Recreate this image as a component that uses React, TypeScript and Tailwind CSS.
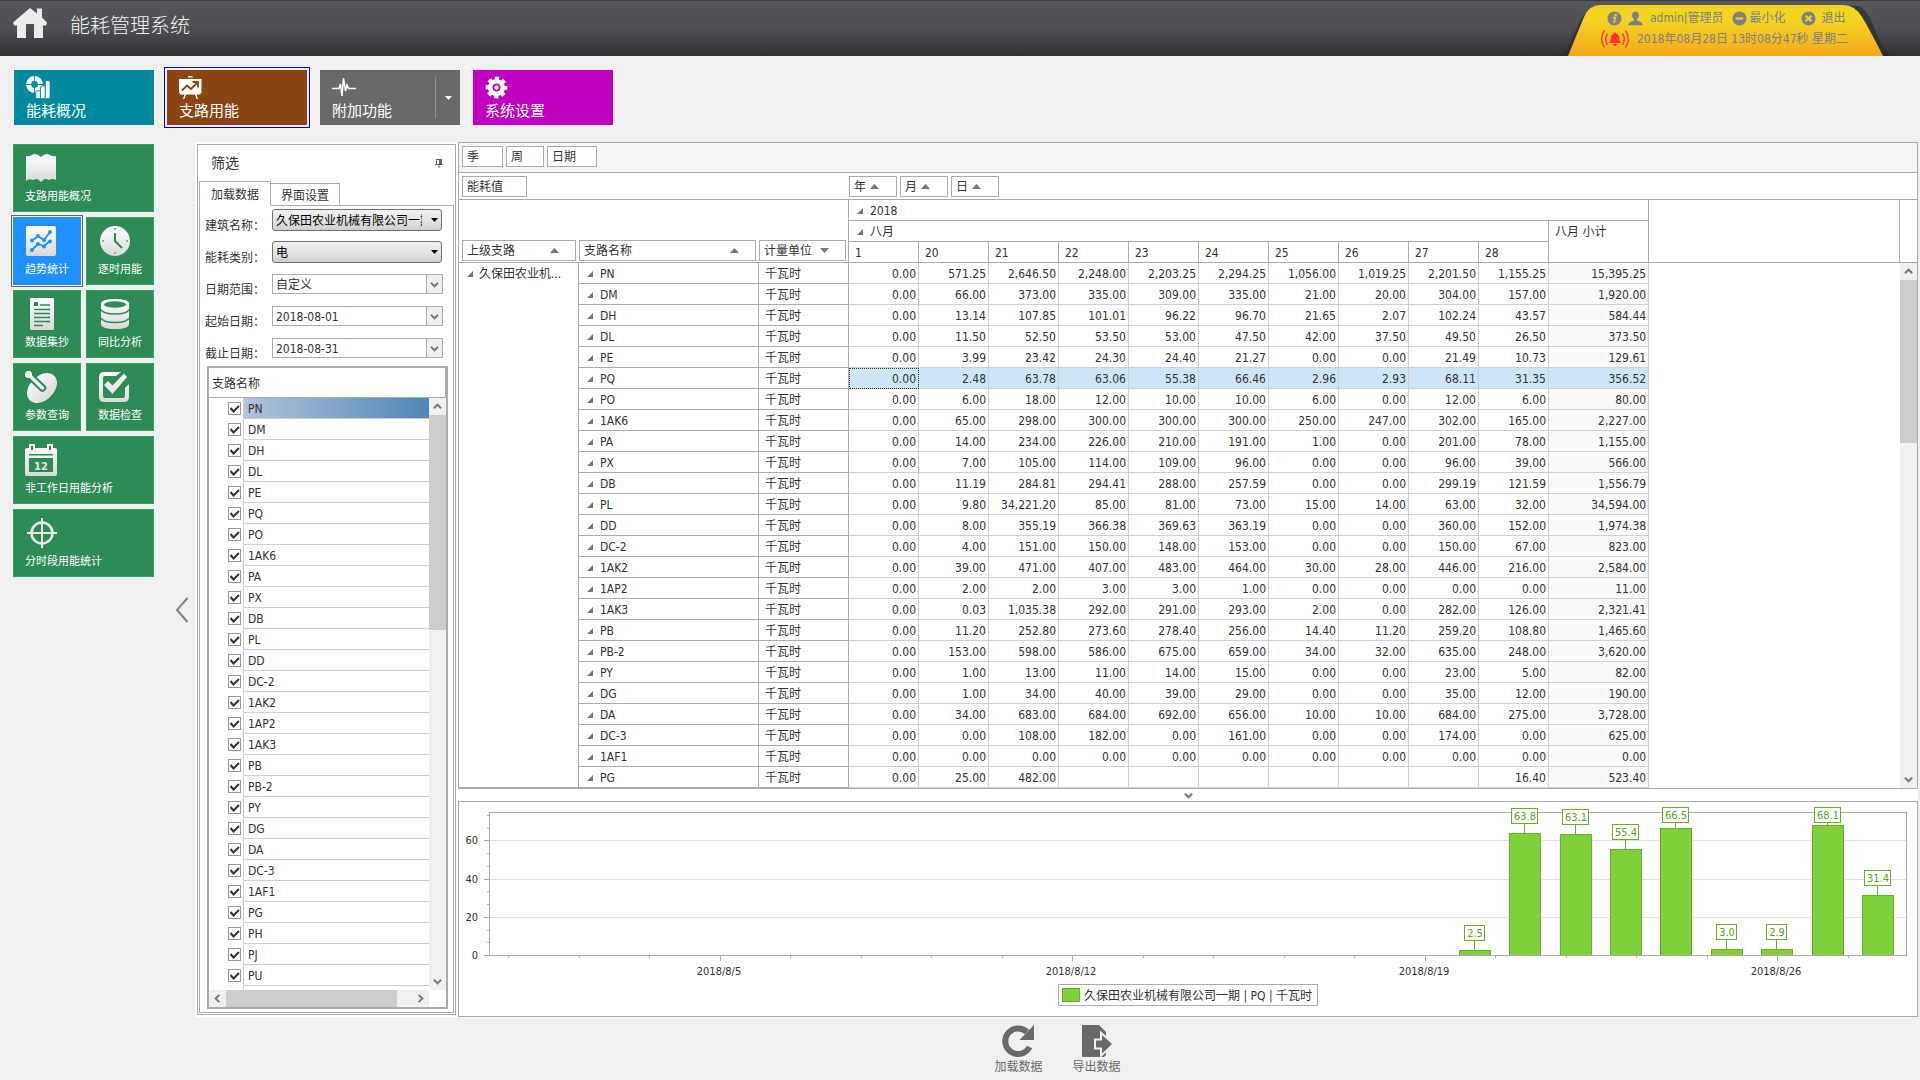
import { useState } from "react";
import type { ReactNode } from "react";
import clsx from "clsx";

const UNIT = "千瓦时";
const DAYS = ["1", "20", "21", "22", "23", "24", "25", "26", "27", "28"];

type Row = { name: string; values: string[]; total: string };

// name | one value per day | month subtotal
const ROWS: Row[] = [
    "PN|0.00|571.25|2,646.50|2,248.00|2,203.25|2,294.25|1,056.00|1,019.25|2,201.50|1,155.25|15,395.25",
    "DM|0.00|66.00|373.00|335.00|309.00|335.00|21.00|20.00|304.00|157.00|1,920.00",
    "DH|0.00|13.14|107.85|101.01|96.22|96.70|21.65|2.07|102.24|43.57|584.44",
    "DL|0.00|11.50|52.50|53.50|53.00|47.50|42.00|37.50|49.50|26.50|373.50",
    "PE|0.00|3.99|23.42|24.30|24.40|21.27|0.00|0.00|21.49|10.73|129.61",
    "PQ|0.00|2.48|63.78|63.06|55.38|66.46|2.96|2.93|68.11|31.35|356.52",
    "PO|0.00|6.00|18.00|12.00|10.00|10.00|6.00|0.00|12.00|6.00|80.00",
    "1AK6|0.00|65.00|298.00|300.00|300.00|300.00|250.00|247.00|302.00|165.00|2,227.00",
    "PA|0.00|14.00|234.00|226.00|210.00|191.00|1.00|0.00|201.00|78.00|1,155.00",
    "PX|0.00|7.00|105.00|114.00|109.00|96.00|0.00|0.00|96.00|39.00|566.00",
    "DB|0.00|11.19|284.81|294.41|288.00|257.59|0.00|0.00|299.19|121.59|1,556.79",
    "PL|0.00|9.80|34,221.20|85.00|81.00|73.00|15.00|14.00|63.00|32.00|34,594.00",
    "DD|0.00|8.00|355.19|366.38|369.63|363.19|0.00|0.00|360.00|152.00|1,974.38",
    "DC-2|0.00|4.00|151.00|150.00|148.00|153.00|0.00|0.00|150.00|67.00|823.00",
    "1AK2|0.00|39.00|471.00|407.00|483.00|464.00|30.00|28.00|446.00|216.00|2,584.00",
    "1AP2|0.00|2.00|2.00|3.00|3.00|1.00|0.00|0.00|0.00|0.00|11.00",
    "1AK3|0.00|0.03|1,035.38|292.00|291.00|293.00|2.00|0.00|282.00|126.00|2,321.41",
    "PB|0.00|11.20|252.80|273.60|278.40|256.00|14.40|11.20|259.20|108.80|1,465.60",
    "PB-2|0.00|153.00|598.00|586.00|675.00|659.00|34.00|32.00|635.00|248.00|3,620.00",
    "PY|0.00|1.00|13.00|11.00|14.00|15.00|0.00|0.00|23.00|5.00|82.00",
    "DG|0.00|1.00|34.00|40.00|39.00|29.00|0.00|0.00|35.00|12.00|190.00",
    "DA|0.00|34.00|683.00|684.00|692.00|656.00|10.00|10.00|684.00|275.00|3,728.00",
    "DC-3|0.00|0.00|108.00|182.00|0.00|161.00|0.00|0.00|174.00|0.00|625.00",
    "1AF1|0.00|0.00|0.00|0.00|0.00|0.00|0.00|0.00|0.00|0.00|0.00",
    "PG|0.00|25.00|482.00|||||||16.40|523.40",
].map((line) => {
    const [name, ...values] = line.split("|");
    return { name, values: values.slice(0, 10), total: values[10] };
});

const BRANCHES = [...ROWS.map((row) => row.name), "PH", "PJ", "PU"];

const BARS = [
    { day: 20, value: 2.48, label: "2.5" },
    { day: 21, value: 63.78, label: "63.8" },
    { day: 22, value: 63.06, label: "63.1" },
    { day: 23, value: 55.38, label: "55.4" },
    { day: 24, value: 66.46, label: "66.5" },
    { day: 25, value: 2.96, label: "3.0" },
    { day: 26, value: 2.93, label: "2.9" },
    { day: 27, value: 68.11, label: "68.1" },
    { day: 28, value: 31.35, label: "31.4" },
];

/* ---------- small glyphs ---------- */

const CHEVRONS = {
    up: "M1 7 5 3 9 7",
    down: "M1 3 5 7 9 3",
    left: "M7 1 3 5 7 9",
    right: "M3 1 7 5 3 9",
};

function Chevron({ dir }: { dir: keyof typeof CHEVRONS }) {
    return (
        <svg viewBox="0 0 10 10" className="h-[9px] w-[9px]" aria-hidden="true">
            <path d={CHEVRONS[dir]} fill="none" stroke="#7a7a7a" strokeWidth="2.2" />
        </svg>
    );
}

function Expand() {
    return (
        <svg viewBox="0 0 6 6" className="inline-block h-[6px] w-[6px] shrink-0" aria-hidden="true">
            <path d="M6 0V6H0z" fill="#777" />
        </svg>
    );
}

function Sort({ down = false }: { down?: boolean }) {
    return (
        <svg viewBox="0 0 9 5" className="h-[5px] w-[9px] shrink-0" aria-hidden="true">
            <path d={down ? "M0 0H9L4.500 5z" : "M0 5H9L4.500 0z"} fill="#777" />
        </svg>
    );
}

/* ---------- header ---------- */

function InfoIcon() {
    return (
        <svg viewBox="0 0 16 16" className="h-[15px] w-[15px]" aria-hidden="true">
            <circle cx="8" cy="8" r="7.500" fill="#808080" />
            <circle cx="9.300" cy="4.200" r="1.300" fill="#f3cf22" />
            <path d="M6 7h3l-1.300 4.600h1.200" fill="none" stroke="#f3cf22" strokeWidth="1.700" />
        </svg>
    );
}

function UserIcon() {
    return (
        <svg viewBox="0 0 16 16" className="h-[15px] w-[15px]" aria-hidden="true">
            <path
                d="M8 0.500c2.300 0 3.700 1.700 3.700 4 0 1.700-.8 3.200-1.900 4.100v1.900c2.800.6 5.700 1.600 5.900 4.800H.3c.2-3.200 3.100-4.200 5.900-4.800V8.600C5.100 7.700 4.300 6.200 4.300 4.500c0-2.300 1.400-4 3.700-4z"
                fill="#808080"
            />
        </svg>
    );
}

function RoundIcon({ d }: { d: string }) {
    return (
        <svg viewBox="0 0 16 16" className="h-[15px] w-[15px]" aria-hidden="true">
            <circle cx="8" cy="8" r="7.500" fill="#808080" />
            <path d={d} stroke="#f3cf22" strokeWidth="2.400" />
        </svg>
    );
}

function AlarmIcon() {
    return (
        <svg viewBox="0 0 30 20" className="h-[20px] w-[30px]" aria-hidden="true">
            <path
                d="M15 3.500c.8 0 1.300.5 1.300 1.200 2 .6 3 2.300 3 4.500 0 2.500.6 3.700 1.700 4.800H9c1.100-1.100 1.700-2.300 1.700-4.800 0-2.200 1-3.900 3-4.500 0-.7.5-1.200 1.300-1.200zM13 15h4c0 1.200-.9 1.900-2 1.900s-2-.7-2-1.900z"
                fill="#f33"
            />
            <path
                d="M7.500 4.500Q4 10 7.500 16M4.500 1.500Q-1.500 10 4.500 18.500M22.500 4.500Q26 10 22.500 16M25.500 1.500Q31.500 10 25.500 18.500"
                fill="none"
                stroke="#f3473a"
                strokeWidth="1.500"
            />
        </svg>
    );
}

function Header() {
    return (
        <header className="flex h-14 shrink-0 items-start border-t border-[#3c3d40] bg-linear-to-b from-[#57585c] via-[#4d4f52] to-[#2f3134]">
            <a href="#home" aria-label="首页" className="mt-[6px] ml-[12px]">
                <svg viewBox="0 0 36 32" className="h-[32px] w-[36px]" aria-hidden="true">
                    <path
                        d="M18 1 25 6.500V1.500h5v9L35 15.500 34 18.500h-3V31h-9V17h-8V31H5V18.500H2L1 15.500z"
                        fill="#ececec"
                    />
                </svg>
            </a>
            <h1 className="mt-[9px] ml-[22px] text-[20px] leading-[32px] font-light text-[#f2f2f2]">
                能耗管理系统
            </h1>
            <div className="relative mt-[4px] mr-[35px] ml-auto h-[51px] w-[316px] text-[12px] text-[#808080]">
                <svg viewBox="0 0 336 51" className="absolute top-0 -left-[10px] h-[51px] w-[336px]" aria-hidden="true">
                    <defs>
                        <linearGradient id="badge" x1="0" y1="0" x2="0" y2="1">
                            <stop offset="0.3" stopColor="#f3d422" />
                            <stop offset="1" stopColor="#f4a71b" />
                        </linearGradient>
                    </defs>
                    <path d="M0 51C14 48 16 8 36 1H300C316 8 318 48 336 51z" fill="#2a2c2f" opacity="0.7" />
                    <path d="M9 51 25 12Q30 0 41 0H284Q296 0 303 12 311 25 324 51z" fill="url(#badge)" />
                </svg>
                <div className="relative flex h-[26px] items-center pl-[38px]">
                    <InfoIcon />
                    <span className="ml-[6px] flex items-center gap-[7px]">
                        <UserIcon />
                        admin|管理员
                    </span>
                    <button type="button" className="ml-[9px] flex items-center gap-[2px]">
                        <RoundIcon d="M4 8H12" />
                        最小化
                    </button>
                    <button type="button" className="ml-[15px] flex items-center gap-[6px]">
                        <RoundIcon d="M5 5 11 11M11 5 5 11" />
                        退出
                    </button>
                </div>
                <div className="relative flex h-[16px] items-center gap-[7px] pl-[31px] whitespace-nowrap">
                    <AlarmIcon />
                    2018年08月28日 13时08分47秒 星期二
                </div>
            </div>
        </header>
    );
}

/* ---------- top navigation ---------- */

type TopTileProps = {
    label: string;
    color: string;
    icon: ReactNode;
    active?: boolean;
    split?: boolean;
};

function TopTile({ label, color, icon, active, split }: TopTileProps) {
    return (
        <button
            type="button"
            className={clsx(
                "flex h-[55px] w-[140px] text-left text-white",
                color,
                active && "outline outline-offset-2 outline-[#0000e6]"
            )}
        >
            <span className="flex flex-1 flex-col pt-[6px] pl-[12px]">
                <svg viewBox="0 0 24 24" className="h-6 w-6" aria-hidden="true">
                    {icon}
                </svg>
                <span className="text-[15px] leading-[22px]">{label}</span>
            </span>
            {split && (
                <span className="my-[7px] flex w-[25px] items-center justify-center border-l border-[#909090]">
                    <svg viewBox="0 0 7 4" className="h-[4px] w-[7px]" aria-hidden="true">
                        <path d="M0 0H7L3.500 4z" fill="#fff" />
                    </svg>
                </span>
            )}
        </button>
    );
}

function TopNav() {
    return (
        <nav className="flex gap-[13px] pt-[14px] pb-[17px] pl-[14px]">
            <TopTile
                label="能耗概况"
                color="bg-[#00899e]"
                icon={
                    <>
                        <circle cx="8.500" cy="8.500" r="5.900" fill="none" stroke="#fff" strokeWidth="5" />
                        <path d="M8.500 0V5.500M0 8.500H5.500M8.500 11.500V17M11.500 8.500H17" stroke="#00899e" strokeWidth="0.900" />
                        <g fill="#fff" stroke="#00899e" strokeWidth="0.900">
                            <rect x="9.800" y="14.700" width="4.700" height="8" rx="1.200" />
                            <rect x="14.600" y="9.700" width="4.700" height="13" rx="1.200" />
                            <rect x="19.400" y="4.700" width="4.700" height="18" rx="1.200" />
                        </g>
                    </>
                }
            />
            <TopTile
                label="支路用能"
                color="bg-[#8b4513]"
                active
                icon={
                    <>
                        <path d="M9 0h4.500v1.500H9zM0 3H22.500V17H0zM7 18.500 5.500 23H4L5.500 18.500zM16 18.500 17.500 23H19L17.500 18.500zM1 17H21.500V18.500H1z" fill="#fff" />
                        <path d="M3 14.500 8 9.500l4 3.500 6-6M13.500 6H19v5.500" fill="none" stroke="#8b4513" strokeWidth="1.800" />
                    </>
                }
            />
            <TopTile
                label="附加功能"
                color="bg-[#696969]"
                split
                icon={
                    <path
                        d="M0 12.500H7L8.500 8l1.500 12L11.500 2l2 13 1.500-6 1.500 3.500H24"
                        fill="none"
                        stroke="#fff"
                        strokeWidth="1.500"
                    />
                }
            />
            <TopTile
                label="系统设置"
                color="bg-[#c000c0]"
                icon={
                    <>
                        <circle cx="11.500" cy="11.500" r="6.300" fill="none" stroke="#fff" strokeWidth="4.500" />
                        <circle cx="11.500" cy="11.500" r="9.300" fill="none" stroke="#fff" strokeWidth="3.200" strokeDasharray="4.300 3.004" strokeDashoffset="2" />
                        <circle cx="11.500" cy="11.500" r="2.200" fill="#fff" />
                    </>
                }
            />
        </nav>
    );
}

/* ---------- side navigation ---------- */

const SHEEN = "url(#sheen)";
const GREEN = "#2e8b57";

const SIDE_TILES = [
    {
        label: "支路用能概况",
        wide: true,
        icon: (
            <path
                d="M1 4Q4 5 7 3 11 0 16 5 21 0 25 3 28 5 31 4V28Q28 26 24 28 19 25.500 17 29.500H15Q13 25.500 8 28 4 26 1 29z"
                fill={SHEEN}
            />
        ),
    },
    {
        label: "趋势统计",
        active: true,
        icon: (
            <>
                <rect x="1" y="1" width="30" height="30" rx="2" fill={SHEEN} />
                <path d="M7 16 13 11l6 4 6-8M7 25 13 19l6 2 6-5" fill="none" stroke="#1e90ff" strokeWidth="1.800" />
                <g fill="#1e90ff">
                    <circle cx="7" cy="15.500" r="2" />
                    <circle cx="13" cy="11" r="2" />
                    <circle cx="19" cy="15" r="2" />
                    <circle cx="25" cy="7" r="2" />
                    <circle cx="7" cy="25" r="2" />
                    <circle cx="13" cy="19" r="2" />
                    <circle cx="19" cy="21.500" r="2" />
                    <circle cx="25" cy="16.500" r="2" />
                </g>
            </>
        ),
    },
    {
        label: "逐时用能",
        icon: (
            <>
                <circle cx="17" cy="16" r="15" fill={SHEEN} />
                <path d="M17 8V16L24 23" fill="none" stroke={GREEN} strokeWidth="2" />
                <path d="M16 3h2v2h-2zM16 27h2v2h-2zM4 15h2v2H4zM28 15h2v2h-2z" fill="#7fb598" />
            </>
        ),
    },
    {
        label: "数据集抄",
        icon: (
            <>
                <rect x="5" y="0" width="24" height="32" rx="1" fill={SHEEN} />
                <rect x="9" y="4" width="4" height="4" fill={GREEN} />
                <path d="M15 7H25M9 11.500H25M9 15.500H25M9 19.500H25M9 23.500H25M9 27.500H18" stroke={GREEN} strokeWidth="1.700" />
            </>
        ),
    },
    {
        label: "同比分析",
        icon: (
            <>
                <path d="M3 6V26Q3 31 17 31T31 26V6Q31 1 17 1T3 6z" fill={SHEEN} />
                <ellipse cx="17" cy="6.500" rx="11" ry="3.200" fill={GREEN} />
                <path d="M3 11.500Q5 16 17 16T31 11.500M3 20Q5 24.500 17 24.500T31 20" fill="none" stroke={GREEN} strokeWidth="1.600" />
            </>
        ),
    },
    {
        label: "参数查询",
        icon: (
            <>
                <ellipse cx="17" cy="17" rx="17.500" ry="12" transform="rotate(-45 17 17)" fill={SHEEN} />
                <path d="M3 3 17.500 17" stroke={GREEN} strokeWidth="7.500" strokeLinecap="round" />
                <path d="M4 4 17.500 17" stroke="#f4f4f4" strokeWidth="3.500" strokeLinecap="round" />
                <circle cx="3.500" cy="3.500" r="3.500" fill="#fff" />
            </>
        ),
    },
    {
        label: "数据检查",
        icon: (
            <>
                <path
                    d="M23 1H6Q1 1 1 6V26Q1 31 6 31H26Q31 31 31 26V13L27 17V25Q27 27 25 27H7Q5 27 5 25V7Q5 5 7 5H18z"
                    fill={SHEEN}
                />
                <path d="M6 14 10 10 14.500 14.500 26 2.500 29 6 14.500 23z" fill={SHEEN} />
            </>
        ),
    },
    {
        label: "非工作日用能分析",
        wide: true,
        icon: (
            <>
                <path d="M2 4H30Q32 4 32 6V30Q32 32 30 32H2Q0 32 0 30V6Q0 4 2 4z" fill={SHEEN} />
                <path d="M4 0H10V7H4zM22 0H28V7H22z" fill="#fff" />
                <path d="M6 2H8V6H6zM24 2H26V6H24zM4 10H28V11.500H4zM4 14H28V28H4z" fill={GREEN} />
                <text x="16" y="25.500" textAnchor="middle" fontSize="11" fontWeight="bold" fill="#e8e8e8">
                    12
                </text>
            </>
        ),
    },
    {
        label: "分时段用能统计",
        wide: true,
        icon: (
            <>
                <circle cx="17" cy="16" r="10.500" fill="none" stroke="#e9e9e9" strokeWidth="2.600" />
                <path d="M17 1V31M2 16H32" stroke="#e9e9e9" strokeWidth="2" />
            </>
        ),
    },
];

function SideNav() {
    return (
        <nav className="grid w-[141px] grid-cols-2 content-start gap-[5px]">
            <svg className="absolute h-0 w-0" aria-hidden="true">
                <defs>
                    <linearGradient id="sheen" gradientUnits="userSpaceOnUse" x1="0" y1="0" x2="0" y2="32">
                        <stop offset="0" stopColor="#fff" />
                        <stop offset="1" stopColor="#d8d8d8" />
                    </linearGradient>
                </defs>
            </svg>
            {SIDE_TILES.map((tile) => (
                <button
                    key={tile.label}
                    type="button"
                    className={clsx(
                        "flex h-[68px] flex-col border pt-[7px] pl-[11px] text-left whitespace-nowrap text-white",
                        tile.wide && "col-span-2",
                        tile.active
                            ? "border-[#1e90ff] bg-[#1e90ff] outline outline-offset-1 outline-[#666]"
                            : "border-[#2fa562] bg-[#2e8b57]"
                    )}
                >
                    <svg viewBox="0 0 32 32" className="h-8 w-8" aria-hidden="true">
                        {tile.icon}
                    </svg>
                    <span className="text-[11px] leading-[26px]">{tile.label}</span>
                </button>
            ))}
        </nav>
    );
}

/* ---------- filter panel ---------- */

type FieldProps = { id: string; label: string; value: string; glossy?: boolean };

function Field({ id, label, value, glossy }: FieldProps) {
    return (
        <div className="flex h-8 items-start last:h-[29px]">
            <label htmlFor={id} className="w-[72px] pl-[5px] text-[12px] leading-[34px]">
                {label}：
            </label>
            <div className={clsx("relative", glossy ? "w-[170px]" : "mt-px w-[171px]")}>
                <select
                    id={id}
                    defaultValue={value}
                    className={clsx(
                        "block w-full appearance-none overflow-hidden pt-px pl-[3px] text-[12px]",
                        glossy
                            ? "h-[22px] rounded-[3px] border border-[#707070] bg-linear-to-b from-[#f2f2f2] via-[#e4e4e4] to-[#cfcfcf] pr-[19px] text-black"
                            : "h-[20px] border border-[#ababab] bg-white pr-[19px]"
                    )}
                >
                    <option>{value}</option>
                </select>
                {glossy ? (
                    <svg viewBox="0 0 7 4" className="pointer-events-none absolute top-[9px] right-[4px] h-[4px] w-[7px]" aria-hidden="true">
                        <path d="M0 0H7L3.500 4z" fill="#000" />
                    </svg>
                ) : (
                    <span className="pointer-events-none absolute inset-y-0 right-0 flex w-[17px] items-center justify-center border border-[#ababab] bg-[#f0f0f0]">
                        <Chevron dir="down" />
                    </span>
                )}
            </div>
        </div>
    );
}

function BranchItem({ name, selected }: { name: string; selected: boolean }) {
    const id = `branch-${name}`;
    return (
        <li className="flex h-[21px] shrink-0">
            <span className="flex w-[35px] items-center justify-end border-r border-[#cfcfcf] pr-[2px]">
                <span className="relative h-[13px] w-[13px]">
                    <input
                        id={id}
                        type="checkbox"
                        defaultChecked
                        className="peer block h-[13px] w-[13px] appearance-none border border-[#999] bg-white"
                    />
                    <svg
                        viewBox="0 0 13 13"
                        className="pointer-events-none invisible absolute inset-0 peer-checked:visible"
                        aria-hidden="true"
                    >
                        <path d="M2.500 6 5.500 9.500 11 4" fill="none" stroke="#333" strokeWidth="2" />
                    </svg>
                </span>
            </span>
            <label
                htmlFor={id}
                className={clsx(
                    "flex-1 border-b border-[#cfcfcf] pt-[2px] pl-[4px] leading-[18px]",
                    selected && "bg-linear-to-r from-[#b0c4de] to-[#4f86b6]"
                )}
            >
                {name}
            </label>
        </li>
    );
}

function ScrollBar({ thumb }: { thumb: string }) {
    return (
        <div className="flex w-[17px] flex-1 flex-col items-center bg-[#f0f0f0]">
            <span className="flex h-[17px] items-center">
                <Chevron dir="up" />
            </span>
            <span className={clsx("w-full bg-[#cdcdcd]", thumb)} />
            <span className="mt-auto flex h-[17px] items-center">
                <Chevron dir="down" />
            </span>
        </div>
    );
}

function FilterPanel() {
    const [tab, setTab] = useState("load");

    return (
        <aside className="my-[2px] flex w-[259px] shrink-0 flex-col border border-[#ababab] p-px">
            <div className="flex h-[35px] items-center justify-between pr-[11px] pl-[12px]">
                <h2 className="text-[14px]">筛选</h2>
                <button type="button" aria-label="固定">
                    <svg viewBox="0 0 8 9" className="h-[9px] w-[8px]" aria-hidden="true">
                        <path d="M1 0H7V5H8V6H4.500V9H3.500V6H0V5H1zM2 1V5H4V1z" fill="#666" fillRule="evenodd" />
                    </svg>
                </button>
            </div>
            <div className="flex h-[25px] shrink-0 items-end" role="tablist">
                <button
                    type="button"
                    role="tab"
                    aria-selected={tab === "load"}
                    onClick={() => setTab("load")}
                    className="h-[25px] w-[72px] border border-[#ababab] border-b-white pt-[2px] text-[12px]"
                >
                    加载数据
                </button>
                <button
                    type="button"
                    role="tab"
                    aria-selected={tab === "view"}
                    onClick={() => setTab("view")}
                    className="h-[23px] w-[69px] border-t border-r border-b border-[#ababab] pt-[2px] text-[12px]"
                >
                    界面设置
                </button>
                <span className="flex-1 border-b border-[#ababab]" />
            </div>
            <div className="flex flex-1 flex-col border-x border-b border-[#ababab]">
                <div className="pt-[3px]">
                    <Field id="building" label="建筑名称" value="久保田农业机械有限公司一期" glossy />
                    <Field id="energy" label="能耗类别" value="电" glossy />
                    <Field id="range" label="日期范围" value="自定义" />
                    <Field id="start" label="起始日期" value="2018-08-01" />
                    <Field id="end" label="截止日期" value="2018-08-31" />
                </div>
                <div className="mr-[5px] mb-[3px] ml-[7px] flex min-h-0 flex-1 flex-col border-2 border-[#ababab]">
                    <div className="h-[30px] border-r border-b border-[#ababab] pl-[3px] leading-[32px]">支路名称</div>
                    <div className="flex min-h-0 flex-1">
                        <ul className="flex h-0 min-h-full flex-1 flex-col overflow-hidden">
                            {BRANCHES.map((name, index) => (
                                <BranchItem key={name} name={name} selected={index === 0} />
                            ))}
                            <li className="w-[35px] flex-1 border-r border-[#cfcfcf]" />
                        </ul>
                        <div className="flex flex-col">
                            <ScrollBar thumb="h-[215px]" />
                        </div>
                    </div>
                    <div className="mr-[17px] flex h-[17px] shrink-0 items-center bg-[#f0f0f0]">
                        <span className="flex w-[17px] justify-center">
                            <Chevron dir="left" />
                        </span>
                        <span className="h-full w-[171px] bg-[#cdcdcd]" />
                        <span className="ml-auto flex w-[17px] justify-center">
                            <Chevron dir="right" />
                        </span>
                    </div>
                </div>
            </div>
        </aside>
    );
}

/* ---------- pivot grid ---------- */

function PivotField({ label, className, children }: { label: string; className?: string; children?: ReactNode }) {
    return (
        <button
            type="button"
            className={clsx(
                "flex h-[21px] items-center gap-[4px] border border-[#ababab] bg-white pl-[4px] text-left font-normal whitespace-nowrap",
                className
            )}
        >
            {label}
            {children}
        </button>
    );
}

function PivotGrid() {
    const head = "h-[21px] border-r border-b border-[#ababab] p-0 pt-[2px] text-left align-top leading-[18px] font-normal";
    const cell = "h-[21px] border-r border-b p-0 pt-[2px] leading-[18px]";

    return (
        <section className="border border-[#ababab]">
            <div className="flex h-[30px] gap-[3px] border-b border-[#ababab] bg-[#f5f5f5] pt-[3px] pl-[3px]">
                <PivotField label="季" className="w-[41px]" />
                <PivotField label="周" className="w-[38px]" />
                <PivotField label="日期" className="w-[50px]" />
            </div>
            <div className="flex h-[27px] border-b border-[#ababab] pt-[3px]">
                <div className="w-[390px] pl-[3px]">
                    <PivotField label="能耗值" className="w-[65px]" />
                </div>
                <div className="flex gap-[3px]">
                    {["年", "月", "日"].map((label) => (
                        <PivotField key={label} label={label} className="w-[48px]">
                            <Sort />
                        </PivotField>
                    ))}
                </div>
            </div>
            <div className="flex">
                <table className="w-full flex-1 table-fixed border-separate border-spacing-0">
                    <colgroup>
                        <col className="w-[120px]" />
                        <col className="w-[180px]" />
                        <col className="w-[90px]" />
                        {DAYS.map((day) => (
                            <col key={day} className="w-[70px]" />
                        ))}
                        <col className="w-[100px]" />
                        <col />
                    </colgroup>
                    <thead>
                        <tr>
                            <th rowSpan={3} className="border-b border-[#ababab] px-[3px] pb-px align-bottom font-normal">
                                <PivotField label="上级支路" className="w-full">
                                    <span className="mr-[16px] ml-auto">
                                        <Sort />
                                    </span>
                                </PivotField>
                            </th>
                            <th rowSpan={3} className="border-b border-[#ababab] p-0 pr-[3px] pb-px align-bottom font-normal">
                                <PivotField label="支路名称" className="w-full">
                                    <span className="mr-[16px] ml-auto">
                                        <Sort />
                                    </span>
                                </PivotField>
                            </th>
                            <th rowSpan={3} className="border-r border-b border-[#ababab] p-0 pr-[2px] pb-px align-bottom font-normal">
                                <PivotField label="计量单位" className="w-full">
                                    <span className="mr-[16px] ml-auto">
                                        <Sort down />
                                    </span>
                                </PivotField>
                            </th>
                            <th colSpan={11} className={head}>
                                <span className="flex items-center gap-[7px] pl-[8px]">
                                    <Expand />
                                    2018
                                </span>
                            </th>
                            <td rowSpan={3} className="border-b border-[#ababab]" />
                        </tr>
                        <tr>
                            <th colSpan={10} className={head}>
                                <span className="flex items-center gap-[7px] pl-[8px]">
                                    <Expand />
                                    八月
                                </span>
                            </th>
                            <th rowSpan={2} className={head}>
                                <span className="pl-[6px]">八月 小计</span>
                            </th>
                        </tr>
                        <tr>
                            {DAYS.map((day) => (
                                <th key={day} className={head}>
                                    <span className="pl-[6px]">{day}</span>
                                </th>
                            ))}
                        </tr>
                    </thead>
                    <tbody>
                        {ROWS.map((row, rowIndex) => {
                            const selected = row.name === "PQ";
                            return (
                                <tr key={row.name}>
                                    {rowIndex === 0 && (
                                        <th
                                            rowSpan={ROWS.length}
                                            className="border-r border-b border-[#ababab] p-0 pt-[2px] text-left align-top leading-[18px] font-normal"
                                        >
                                            <span className="flex items-center gap-[6px] pl-[8px]">
                                                <Expand />
                                                久保田农业机...
                                            </span>
                                        </th>
                                    )}
                                    <th className={clsx(cell, "border-[#ababab] text-left font-normal")}>
                                        <span className="flex items-center gap-[7px] pl-[8px]">
                                            <Expand />
                                            {row.name}
                                        </span>
                                    </th>
                                    <td className={clsx(cell, "border-[#ababab] pl-[6px]")}>{UNIT}</td>
                                    {row.values.map((value, index) => (
                                        <td
                                            key={DAYS[index]}
                                            className={clsx(
                                                cell,
                                                "border-[#d0d0d0] pr-[2px] text-right",
                                                selected && "bg-[#cde6f7]",
                                                selected && index === 0 && "outline-1 -outline-offset-1 outline-[#333] outline-dotted"
                                            )}
                                        >
                                            {value}
                                        </td>
                                    ))}
                                    <td
                                        className={clsx(
                                            cell,
                                            "border-[#d0d0d0] pr-[2px] text-right",
                                            selected ? "bg-[#cde6f7]" : "bg-[#fafafa]"
                                        )}
                                    >
                                        {row.total}
                                    </td>
                                    {rowIndex === 0 && <td rowSpan={ROWS.length} />}
                                </tr>
                            );
                        })}
                    </tbody>
                </table>
                <div className="flex w-[18px] shrink-0 flex-col items-end">
                    <span className="h-[63px] w-full border-b border-l border-[#ababab]" />
                    <ScrollBar thumb="h-[163px]" />
                </div>
            </div>
        </section>
    );
}

/* ---------- chart ---------- */

const PLOT = { left: 30, right: 1447, top: 10, bottom: 153 };
const toX = (day: number) => Math.round(1016 + (day - 20) * 50.36);
const toY = (value: number) => Math.round(PLOT.bottom - value * 1.912);

function Chart() {
    const minorY = [0, 20, 40, 60].flatMap((base) => [base + 20 / 3, base + 40 / 3]);
    const minorX = Array.from({ length: 20 }, (_, i) => 0.8 + i * 1.4);

    return (
        <section className="border border-[#ababab] pb-[10px]">
            <svg
                viewBox="0 0 1458 182"
                className="block w-full text-[11px]"
                role="img"
                aria-label="PQ 每日能耗"
            >
                <g shapeRendering="crispEdges">
                    {[20, 40, 60].map((v) => (
                        <rect key={v} x={PLOT.left} y={toY(v)} width={PLOT.right - PLOT.left} height="1" fill="#e0e0e0" />
                    ))}
                    {[0, 20, 40, 60].map((v) => (
                        <rect key={v} x={PLOT.left - 5} y={toY(v)} width="5" height="1" fill="#ababab" />
                    ))}
                    {minorY.map((v) => (
                        <rect key={v} x={PLOT.left - 2} y={toY(v)} width="2" height="1" fill="#ababab" />
                    ))}
                    {minorX.map((d) => (
                        <rect key={d} x={toX(d)} y={PLOT.bottom} width="1" height="3" fill="#ababab" />
                    ))}
                    {[5, 12, 19, 26].map((d) => (
                        <rect key={d} x={toX(d)} y={PLOT.bottom} width="1" height="6" fill="#ababab" />
                    ))}
                    <path
                        d={`M${PLOT.left} ${PLOT.top}H${PLOT.right + 1}V${PLOT.bottom + 1}H${PLOT.left}z M${PLOT.left + 1} ${PLOT.top + 1}V${PLOT.bottom}H${PLOT.right}V${PLOT.top + 1}z`}
                        fill="#ababab"
                        fillRule="evenodd"
                    />
                    {BARS.map(({ day, value }) => {
                        const x = toX(day) - 16;
                        const y = toY(value);
                        return (
                            <g key={day}>
                                <rect x={x} y={y} width="32" height={PLOT.bottom - y} fill="#6aaf2c" />
                                <rect x={x + 1} y={y + 1} width="30" height={PLOT.bottom - y - 1} fill="#7fd13b" />
                                <rect x={x + 15} y={Math.max(y - 10, 20)} width="1" height={Math.min(10, y - 20)} fill="#6aaf2c" />
                            </g>
                        );
                    })}
                    {BARS.map(({ day, value, label }) => {
                        const w = label.length === 4 ? 27 : 21;
                        const x = toX(day) - (w + 1) / 2;
                        const y = Math.max(toY(value) - 25, 5);
                        return (
                            <g key={day}>
                                <rect x={x} y={y} width={w} height="16" fill="#6aaf2c" />
                                <rect x={x + 1} y={y + 1} width={w - 2} height="14" fill="#fff" />
                            </g>
                        );
                    })}
                </g>
                <g fill="#5ea226" textAnchor="middle">
                    {BARS.map(({ day, value, label }) => (
                        <text key={day} x={toX(day)} y={Math.max(toY(value) - 25, 5) + 12}>
                            {label}
                        </text>
                    ))}
                </g>
                <g fill="#333" textAnchor="end">
                    {[0, 20, 40, 60].map((v) => (
                        <text key={v} x="19" y={toY(v) + 4}>
                            {v}
                        </text>
                    ))}
                </g>
                <g fill="#333" textAnchor="middle">
                    {[5, 12, 19, 26].map((d) => (
                        <text key={d} x={toX(d) - 1} y="173">
                            {`2018/8/${d}`}
                        </text>
                    ))}
                </g>
            </svg>
            <div className="mx-auto flex h-[22px] w-fit items-center gap-[4px] border border-[#ababab] pr-[5px] pl-[3px]">
                <span className="h-[14px] w-[18px] border border-[#6aaf2c] bg-[#7fd13b]" />
                <span className="pt-px">久保田农业机械有限公司一期 | PQ | 千瓦时</span>
            </div>
        </section>
    );
}

/* ---------- footer ---------- */

function FooterAction({ label, children }: { label: string; children: ReactNode }) {
    return (
        <button type="button" className="flex flex-col items-center text-[12px] leading-[20px] text-[#696969]">
            <svg viewBox="0 0 32 32" className="h-8 w-8" aria-hidden="true">
                {children}
            </svg>
            {label}
        </button>
    );
}

export default function App() {
    return (
        <div className="flex min-h-screen flex-col bg-[#f0f0f0] font-['DejaVu_Sans_Condensed','Noto_Sans_CJK_SC',sans-serif] text-[12px] text-[#333]">
            <Header />
            <TopNav />
            <div className="flex pr-[2px] pl-[13px]">
                <div className="pt-[2px]">
                    <SideNav />
                </div>
                <button type="button" aria-label="收起" className="w-[41px] self-center pt-[60px] pl-[21px]">
                    <svg viewBox="0 0 14 26" className="h-[26px] w-[14px]" aria-hidden="true">
                        <path d="M12.500 1 2 13 12.500 25" fill="none" stroke="#808080" strokeWidth="2" />
                    </svg>
                </button>
                <main className="flex min-w-0 flex-1 gap-[2px] bg-white pl-[2px]">
                    <FilterPanel />
                    <div className="flex min-w-0 flex-1 flex-col">
                        <PivotGrid />
                        <div className="flex h-[12px] items-center justify-center">
                            <Chevron dir="down" />
                        </div>
                        <Chart />
                    </div>
                </main>
            </div>
            <footer className="flex justify-center gap-[30px] pt-[8px] pl-[195px]">
                <FooterAction label="加载数据">
                    <path d="M27.500 22A12.800 12.800 0 1 1 25 7" fill="none" stroke="#696969" strokeWidth="6" />
                    <path d="M32 0V15H17.500z" fill="#696969" />
                </FooterAction>
                <FooterAction label="导出数据">
                    <path d="M2 0H18L25 7V30L23 32H2Q1 32 1 31V1Q1 0 2 0z" fill="#696969" />
                    <path d="M15 15.500H21V10L31 19 21 28.500V22.500H15z" fill="#f0f0f0" stroke="#f0f0f0" strokeWidth="4" />
                    <path d="M15 15.500H21V10L31 19 21 28.500V22.500H15z" fill="#696969" />
                </FooterAction>
            </footer>
        </div>
    );
}
